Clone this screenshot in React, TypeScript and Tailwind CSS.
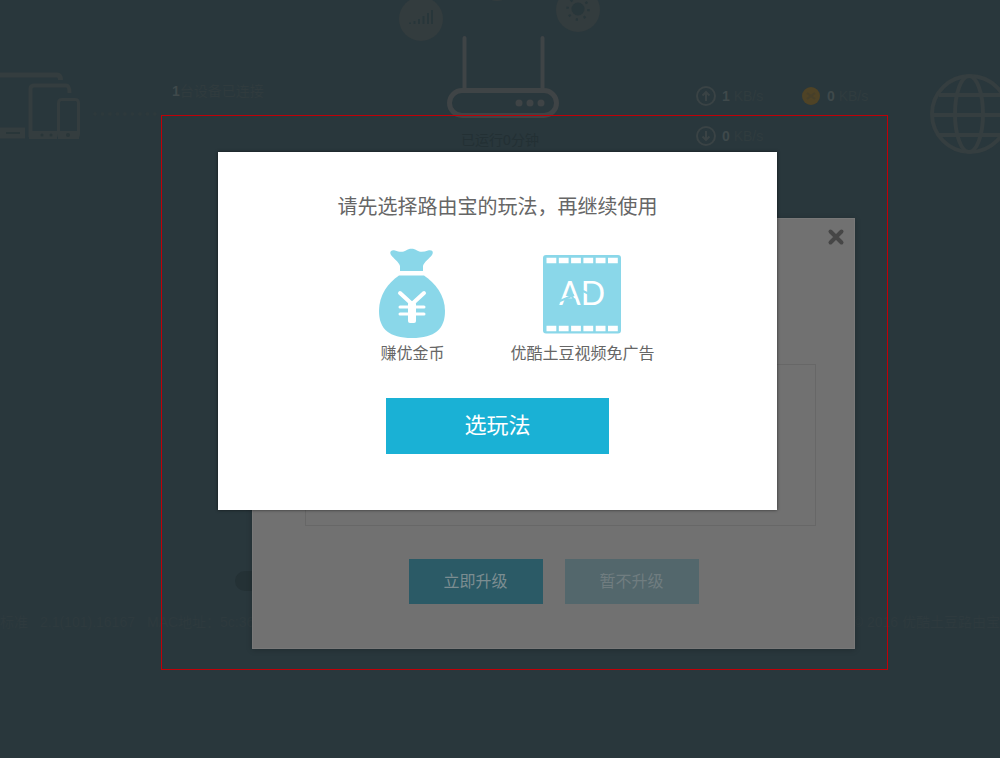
import React from "react";

const fontStack =
  "font-['Liberation_Sans','Noto_Sans_CJK_SC',sans-serif]";

function Devices() {
  return (
    <svg className="h-[70px] w-[81px] shrink-0" viewBox="0 0 81 70" fill="none" stroke="#343d3f" aria-hidden="true">
      <path d="M0 4H57Q60.500 4 60.500 9" strokeWidth="5" />
      <path d="M0 62H25" strokeWidth="11" />
      <path d="M6 62H20" stroke="#293639" strokeWidth="2" />
      <path d="M30.500 66V18Q30.500 14.500 34 14.500H66Q69.500 14.500 69.500 22" strokeWidth="4" />
      <path d="M29 64H57" strokeWidth="8" />
      <circle cx="42" cy="64" r="1.500" fill="#293639" stroke="none" />
      <circle cx="51" cy="64" r="1.500" fill="#293639" stroke="none" />
      <rect x="58.500" y="28.500" width="20" height="38" rx="3" strokeWidth="3" />
      <path d="M58 64H79" strokeWidth="8" />
      <circle cx="68" cy="64" r="2" fill="#293639" stroke="none" />
    </svg>
  );
}

function Globe() {
  return (
    <svg className="h-[82px] w-[82px] shrink-0" viewBox="0 0 82 82" fill="none" stroke="#353e40" strokeWidth="4" aria-hidden="true">
      <circle cx="41" cy="41" r="38" />
      <ellipse cx="40" cy="41" rx="14" ry="38" />
      <path d="M4 42H78M10 22H72M10 62H72" />
    </svg>
  );
}

function Router() {
  return (
    <svg className="h-[82px] w-[112px]" viewBox="0 0 112 82" fill="none" stroke="#3f4446" strokeWidth="4" aria-hidden="true">
      <path d="M17.500 2V54M95.500 2V54" strokeLinecap="round" />
      <rect x="2.500" y="54.500" width="107" height="25" rx="12.500" strokeWidth="5" />
      <g fill="#3f4446" stroke="none">
        <circle cx="72" cy="67" r="3.500" />
        <circle cx="83" cy="67" r="3.500" />
        <circle cx="94" cy="67" r="3.500" />
      </g>
    </svg>
  );
}

function RoundIcons() {
  return (
    <svg className="h-[42px] w-[202px]" viewBox="0 0 202 42" aria-hidden="true">
      <circle cx="22" cy="19" r="22" fill="#333c3e" />
      <path d="M11 24v-1.500M15.500 24v-3M20 24v-5M24.500 24v-8M29 24v-11M33 24v-14" stroke="#28363a" strokeWidth="2" />
      <circle cx="98" cy="-17" r="18" fill="#333c3e" />
      <circle cx="179" cy="10" r="22" fill="#333c3e" />
      <circle cx="179" cy="9" r="6.500" fill="#28363a" />
      <circle cx="179" cy="9" r="10.500" fill="none" stroke="#28363a" strokeWidth="2.500" strokeDasharray="2.200 6.040" />
    </svg>
  );
}

function Arrow({ up }: { up: boolean }) {
  return (
    <svg className="h-5 w-5 shrink-0" viewBox="0 0 20 20" fill="none" stroke="#3a4345" strokeWidth="2" aria-hidden="true">
      <circle cx="10" cy="10" r="9" />
      <path d={up ? "M10 15V6M6.500 9.500 10 6l3.500 3.500" : "M10 5v9M6.500 10.500 10 14l3.500-3.500"} />
    </svg>
  );
}

function Coin() {
  return (
    <svg className="h-5 w-5 shrink-0" viewBox="0 0 20 20" aria-hidden="true">
      <circle cx="10" cy="10" r="9" fill="#4f4326" />
      <path d="M6 7l8 6M14 7l-8 6" stroke="#463f2a" strokeWidth="2" />
    </svg>
  );
}

function Rate({ icon, value }: { icon: React.ReactNode; value: string }) {
  return (
    <div className="flex h-5 items-center gap-1.5">
      {icon}
      <p className="text-sm leading-5 text-[#303c3f]">
        <b className="text-[#3f494b]">{value}</b> KB/s
      </p>
    </div>
  );
}

function MoneyBag() {
  return (
    <svg className="h-[90px] w-[68px]" viewBox="0 0 68 90" aria-hidden="true">
      <path
        d="M22 23V18C21 14 16 11 13 7C11 3.500 13.500 1.500 17 2.500C21 4 25 4.500 28 2.500C31 .2 36 .2 39 2.500C42 4.500 46 4 50 2.500C54 1.500 56 3.500 54 7C51 11 46 14 45 18V23Z"
        fill="#8ad7e9"
      />
      <path d="M21 27.500H46C57 35 67 47 67 63C67 81 57 90 34 90C11 90 1 81 1 63C1 47 10 35 21 27.500Z" fill="#8ad7e9" />
      <g fill="none" stroke="#fff" strokeLinecap="round">
        <path d="M22 45 34 56 46 45" strokeWidth="4" />
        <path d="M22 59H46M22 66H46" strokeWidth="3" />
      </g>
      <rect x="30" y="54" width="8" height="21" rx="2" fill="#fff" />
    </svg>
  );
}

function FilmAd() {
  return (
    <svg className="h-[80px] w-[80px]" viewBox="0 0 80 80" role="img" aria-label="AD">
      <rect x="1" y="1" width="78" height="78.500" rx="3" fill="#8ad7e9" />
      <path d="M4.500 6.500H76M4.500 74.500H76" stroke="#fff" strokeWidth="5.500" strokeDasharray="9.800 2.500" />
      <text x="40" y="51" textAnchor="middle" className="font-['Lato'] text-[32px]" fill="#fff">
        AD
      </text>
      <path d="M18 47l14-6M29 41l4 6M41 37l6 3" stroke="#8ad7e9" strokeWidth="2" />
    </svg>
  );
}

export default function App() {
  return (
    <div className={`relative min-h-screen overflow-hidden bg-[#29373c] ${fontStack}`}>
      <header className="flex h-[155px] items-start justify-between">
        <div className="flex w-[172px] items-center pt-[71px]">
          <Devices />
          <div className="ml-3 mt-4 w-16 border-t-4 border-dotted border-[#2d393c]" />
        </div>
        <p className="w-[226px] pt-[81px] text-sm leading-5 text-[#303b3e]">
          <b className="text-[#3f494b]">1</b>台设备已连接
        </p>
        <div className="flex w-[204px] flex-col items-center">
          <RoundIcons />
          <div className="-mt-1.5 pl-1.5">
            <Router />
          </div>
          <p className="mt-3 text-sm leading-5 text-[#233034]">已运行0分钟</p>
        </div>
        <div className="flex flex-1 pl-[94px] pt-[86px]">
          <div className="flex w-[105px] flex-col gap-5">
            <Rate icon={<Arrow up />} value="1" />
            <Rate icon={<Arrow up={false} />} value="0" />
          </div>
          <Rate icon={<Coin />} value="0" />
        </div>
        <div className="w-[71px] overflow-hidden pt-[73px]">
          <Globe />
        </div>
      </header>

      <footer className="mt-[457px] flex items-center justify-between whitespace-nowrap text-sm leading-5 text-[#2e3a3e]">
        <div className="flex gap-3">
          <p>标准</p>
          <p>2.1(101).16167</p>
          <p>MAC地址：5c:36</p>
        </div>
        <p>© 2016 优酷土豆路由宝</p>
      </footer>

      <div className="absolute left-[235px] top-[571px] h-5 w-8 rounded-full bg-[#243135]" />

      <section className="absolute left-[252px] top-[218px] flex w-[603px] flex-col border border-[#787878] bg-[#717171] pb-11 shadow-[0_1px_6px_rgba(0,0,0,0.2)]">
        <button type="button" aria-label="关闭" className="mr-2 mt-2 self-end">
          <svg className="h-5 w-5" viewBox="0 0 20 20" stroke="#464646" strokeWidth="4" strokeLinecap="round" aria-hidden="true">
            <path d="M4.500 4.500 15.500 15.500M15.500 4.500 4.500 15.500" />
          </svg>
        </button>
        <div className="ml-[52px] mr-[38px] mt-[117px] h-[162px] border border-[#676767]" />
        <div className="mt-[33px] flex justify-center gap-[22px]">
          <button type="button" className="h-[45px] w-[134px] bg-[#2b5a66] text-base text-[#7c8d91]">
            立即升级
          </button>
          <button type="button" className="h-[45px] w-[134px] bg-[#53676c] text-base text-[#707d80]">
            暂不升级
          </button>
        </div>
      </section>

      <div className="pointer-events-none absolute left-[161px] top-[115px] h-[555px] w-[727px] border border-red-700" />

      <section
        role="dialog"
        aria-labelledby="mode-title"
        className="absolute left-[218px] top-[152px] flex w-[559px] flex-col items-center bg-white pb-14 pt-[41px] shadow-[0_0_3px_rgba(0,0,0,0.6)]"
      >
        <h1 id="mode-title" className="text-xl leading-7 text-[#666]">
          请先选择路由宝的玩法，再继续使用
        </h1>
        <div className="mt-[27px] flex items-end justify-center gap-16 pl-[38px] text-base leading-8 text-[#666]">
          <figure className="flex flex-col items-center">
            <MoneyBag />
            <figcaption>赚优金币</figcaption>
          </figure>
          <figure className="flex flex-col items-center">
            <div className="pb-1">
              <FilmAd />
            </div>
            <figcaption>优酷土豆视频免广告</figcaption>
          </figure>
        </div>
        <button type="button" className="mt-7 h-14 w-[223px] bg-[#1ab1d5] text-[22px] leading-8 text-white">
          选玩法
        </button>
      </section>
    </div>
  );
}
